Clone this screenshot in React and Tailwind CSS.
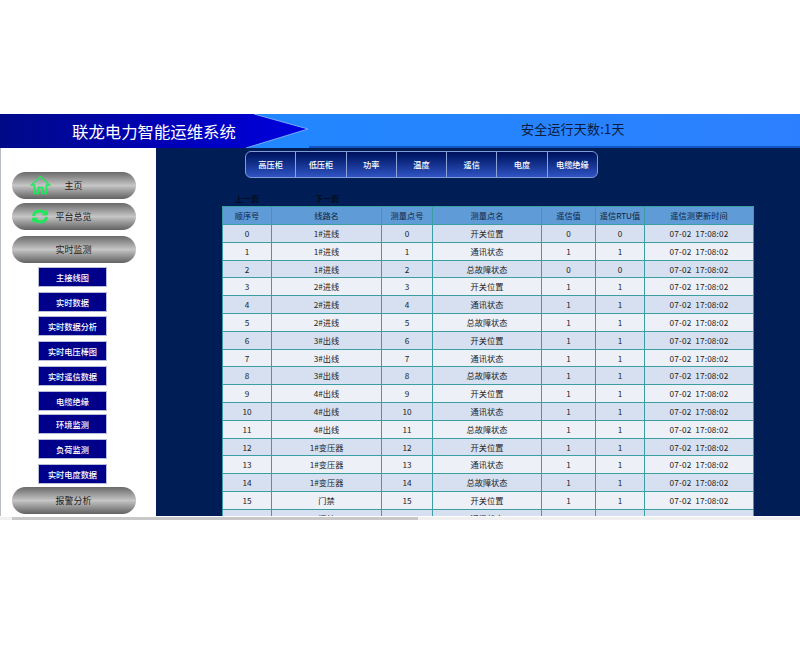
const cols = [49, 110, 51, 109, 54, 49, 109];
const names = [
  ["1#进线", "开关位置"], ["1#进线", "通讯状态"], ["1#进线", "总故障状态"],
  ["2#进线", "开关位置"], ["2#进线", "通讯状态"], ["2#进线", "总故障状态"],
  ["3#出线", "开关位置"], ["3#出线", "通讯状态"], ["3#出线", "总故障状态"],
  ["4#出线", "开关位置"], ["4#出线", "通讯状态"], ["4#出线", "总故障状态"],
  ["1#变压器", "开关位置"], ["1#变压器", "通讯状态"], ["1#变压器", "总故障状态"],
  ["门禁", "开关位置"], ["门禁", "通讯状态"],
];
const zero = [0, 2];
const subs = [
  ["主接线图", "mb-[5px]"], ["实时数据", "mb-[4px]"], ["实时数据分析", "mb-[5px]"],
  ["实时电压棒图", "mb-[5px]"], ["实时遥信数据", "mb-[5px]"], ["电缆绝缘", "mb-[3px]"],
  ["环境监测", "mb-[5px]"], ["负荷监测", "mb-[5px]"], ["实时电度数据", "mb-[3px]"],
];
const tabs = ["高压柜", "低压柜", "功率", "温度", "遥信", "电度", "电缆绝缘"];
const heads = ["顺序号", "线路名", "测量点号", "测量点名", "遥信值", "遥信RTU值", "遥信测更新时间"];
const cell = "border border-[#3a9ea2] p-0 text-center";

function Pill({ children, icon, className }) {
  return (
    <div className={"relative ml-3 w-[124px] h-[27px] rounded-full flex items-center justify-center text-[9px] text-[#1c1c1c] bg-gradient-to-b from-[#6a6a6a] via-[#c6c6c6] to-[#626262] " + className}>
      {icon}
      <span className="-ml-px">{children}</span>
    </div>
  );
}

function Home() {
  return (
    <svg className="absolute left-[18px] top-[3px]" width="21" height="20" viewBox="0 0 21 20" fill="none" stroke="#1fe85a" strokeWidth="1.5">
      <path d="M10.5 1.5 L1.5 10 H4.5 V18.5 H8.5 V12.5 H12.5 V18.5 H16.5 V10 H19.5 Z" />
    </svg>
  );
}

function Sync() {
  return (
    <svg className="absolute left-[19px] top-[5px]" width="18" height="17" viewBox="0 0 18 17" fill="none" stroke="#1fe85a" strokeWidth="2.8">
      <path d="M2.5 8 C3 4.5 6 3 9 3 C11 3 12.5 3.8 13.5 5" />
      <path d="M15.5 9 C15 12.5 12 14 9 14 C7 14 5.5 13.2 4.5 12" />
      <path d="M11.5 6.8 L16.5 6.8 L16 2.5 Z" fill="#1fe85a" strokeWidth="1" />
      <path d="M6.5 10.2 L1.5 10.2 L2 14.5 Z" fill="#1fe85a" strokeWidth="1" />
    </svg>
  );
}

export default function App() {
  const font = { fontFamily: '"Noto Sans CJK SC", "Liberation Sans", sans-serif' };
  return (
    <div className="w-[800px] h-[650px] bg-white pt-[114px] overflow-hidden" style={font}>
      <div className="relative h-[34px] flex bg-gradient-to-r from-[#1a8aff] to-[#2c80ff]">
        <div className="w-[309px] h-full flex items-center pl-[72px] text-[16.4px] text-white whitespace-nowrap bg-gradient-to-r from-[#000a88] via-[#0000b4] to-[#0000e0] [clip-path:polygon(0_0,254px_0,308px_15px,246px_34px,0_34px)]">
          联龙电力智能运维系统
        </div>
        <svg className="absolute left-0 top-0" width="310" height="34" viewBox="0 0 310 34" fill="none" stroke="#7fb4f0" strokeWidth="0.9">
          <path d="M254 0 L308 15 L246 34" />
        </svg>
        <div className="absolute left-[521px] top-[5px] text-[13px] leading-[20px] tracking-[0.2px] text-[#0a1a3c] whitespace-nowrap">安全运行天数:1天</div>
        <div className="absolute left-[309px] right-0 bottom-0 h-[2px] bg-[#1256c4]" />
      </div>

      <div className="relative h-[368px] flex overflow-hidden">
        <aside className="w-[156px] shrink-0 h-full bg-white border-l border-[#b8bcc4] pt-[24px]">
          <div className="-ml-px">
            <Pill icon={<Home />} className="mb-[4px]">主页</Pill>
            <Pill icon={<Sync />} className="mb-[6px]">平台总览</Pill>
            <Pill className="mb-[4px]">实时监测</Pill>
            {subs.map(([t, c]) => (
              <div key={t} className={"ml-[38px] w-[69px] h-5 flex items-center justify-center bg-[#00008b] text-white text-[8.2px] font-medium border border-[#b8bcd8] " + c}>{t}</div>
            ))}
            <Pill>报警分析</Pill>
          </div>
        </aside>

        <main className="flex-1 h-full bg-[#001e55] overflow-hidden pt-[3px]">
          <nav className="ml-[89px] w-[353px] h-[27px] flex rounded-[6px] border border-[#7f9bd8] overflow-hidden bg-gradient-to-b from-[#00105c] to-[#3054c4]">
            {tabs.map((t, i) => (
              <div key={t} className={"flex-1 flex items-center justify-center text-white text-[8.2px] font-medium " + (i ? "border-l border-[#8ea4d8]" : "")}>{t}</div>
            ))}
          </nav>
          <div className="flex h-[28px] items-end pb-[2px] text-[8px] leading-[10px] text-black">
            <span className="ml-[79px] w-[80px]">上一页</span>
            <span>下一页</span>
          </div>
          <table className="ml-[66px] w-[531px] table-fixed border-collapse text-[8.2px] text-[#222]">
            <colgroup>{cols.map((w, i) => <col key={i} style={{ width: w }} />)}</colgroup>
            <thead>
              <tr className="h-[18px] bg-[#5f9bd6]">
                {heads.map((h) => <th key={h} className={cell + " font-normal text-[#10223c]"}>{h}</th>)}
              </tr>
            </thead>
            <tbody>
              {names.map(([line, point], i) => {
                const v = zero.includes(i) ? 0 : 1;
                return (
                  <tr key={i} className={(i % 5 === 2 ? "h-[17px] " : "h-[18px] ") + (i % 2 ? "bg-[#eef0f8]" : "bg-[#d6e0f0]")}>
                    <td className={cell}>{i}</td>
                    <td className={cell}>{line}</td>
                    <td className={cell}>{i}</td>
                    <td className={cell}>{point}</td>
                    <td className={cell}>{v}</td>
                    <td className={cell}>{v}</td>
                    <td className={cell + " whitespace-pre tracking-[0.15px]"}>07-02  17:08:02</td>
                  </tr>
                );
              })}
            </tbody>
          </table>
        </main>
      </div>

      <div className="h-[4px] bg-white pt-px">
        <div className="h-[3px] bg-[#f0f0f0] pl-3">
          <div className="w-[406px] h-full bg-[#c8c8c8]" />
        </div>
      </div>
    </div>
  );
}
